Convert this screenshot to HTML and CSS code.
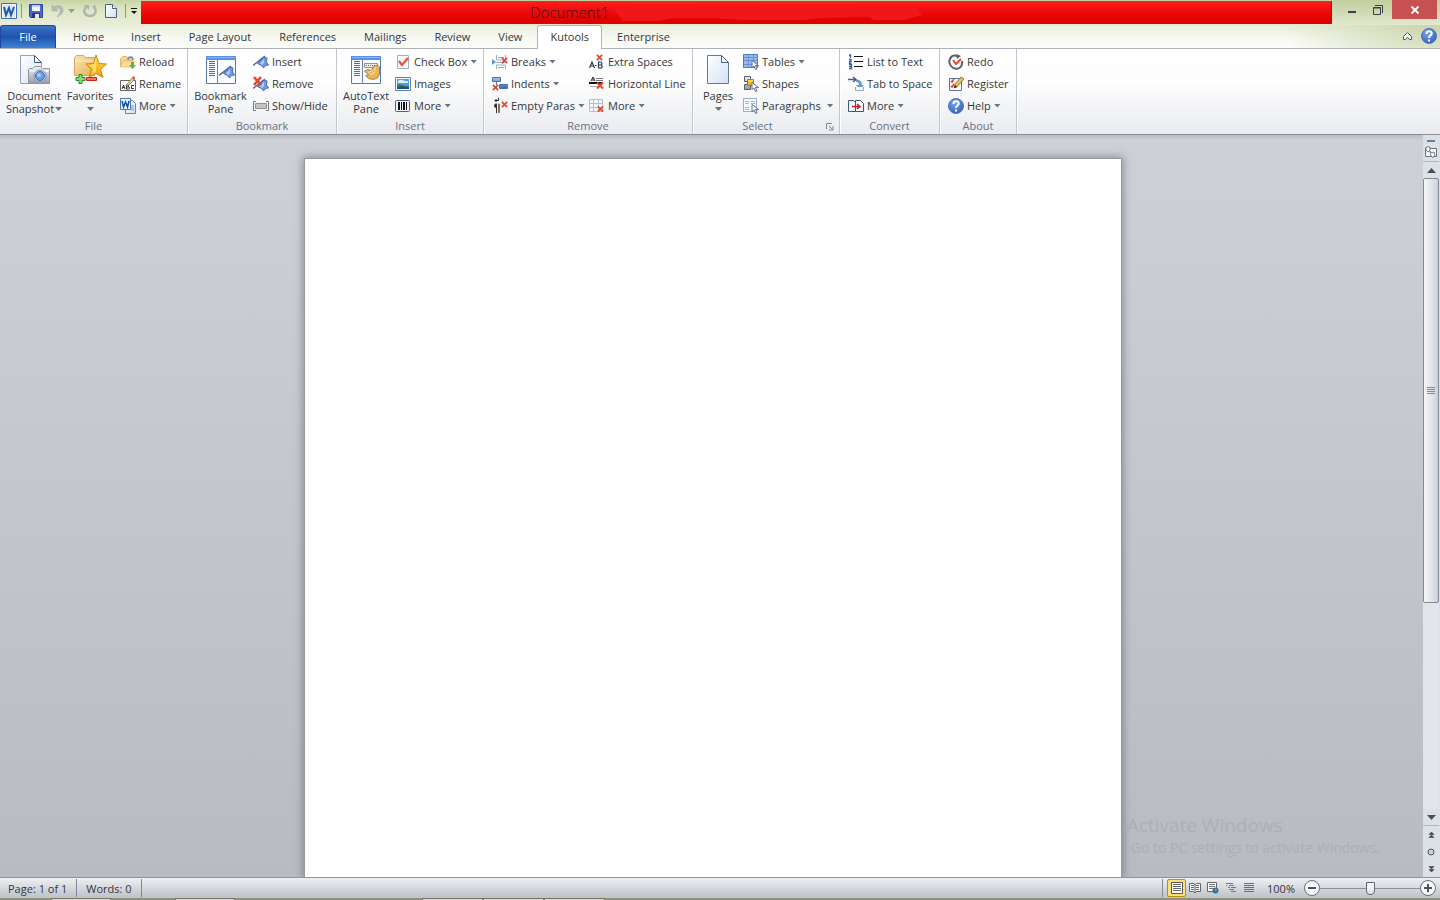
FILE: index.html
```
<!DOCTYPE html>
<html lang="en">
<head>
<meta charset="utf-8">
<title>Document1</title>
<link rel="stylesheet" href="styles.css">
</head>
<body>
<svg class="defs" aria-hidden="true">
  <defs>
    <linearGradient id="blue" x1="0" y1="0" x2="0" y2="1"><stop offset="0" stop-color="#a5c3f0"/><stop offset="1" stop-color="#3e68b4"/></linearGradient>
    <linearGradient id="paper" x1="0" y1="0" x2="1" y2="1"><stop offset="0" stop-color="#fff"/><stop offset="1" stop-color="#d3e1f4"/></linearGradient>
    <linearGradient id="gold" x1="0" y1="0" x2="0" y2="1"><stop offset="0" stop-color="#ffe25a"/><stop offset="1" stop-color="#f0a000"/></linearGradient>
    <linearGradient id="folder" x1="0" y1="0" x2="1" y2="1"><stop offset="0" stop-color="#fbe6b4"/><stop offset="1" stop-color="#e5ae55"/></linearGradient>
    <linearGradient id="grey" x1="0" y1="0" x2="0" y2="1"><stop offset="0" stop-color="#eef1f5"/><stop offset="1" stop-color="#939ca8"/></linearGradient>
    <radialGradient id="ball" cx=".4" cy=".3" r=".8"><stop offset="0" stop-color="#7ba5ee"/><stop offset="1" stop-color="#2f5cb8"/></radialGradient>
    <symbol id="x" viewBox="0 0 8 8"><path d="M1 1l6 6M7 1L1 7" stroke="#e8452c" stroke-width="2"/></symbol>
    <symbol id="flag" viewBox="0 0 16 16"><path d="M0 11.500L12 2" stroke="#55688a" stroke-width="1.400"/><path d="M4.500 9.500L11 3l3 1-.5 4 2 3-3 .5-2 2.500-2-2.500z" fill="#6f9be0" stroke="#3a66b0" stroke-width=".9"/><path d="M7 9.500l4-4.500v4l-2 2z" fill="#b4cef6"/></symbol>
    <symbol id="cursor" viewBox="0 0 8 10"><path d="M1 .5v7l2-1.500 1.500 3.500 1.500-.5-1.500-3.500h3z" fill="#fff" stroke="#52688b" stroke-width=".9"/></symbol>
    <symbol id="q" viewBox="0 0 16 16"><circle cx="8" cy="8" r="7.500" fill="url(#ball)" stroke="#4a73c0"/><path d="M5.500 6c0-4 5.500-3.500 5.200-.3C10.500 7.500 8 7.500 8 10" fill="none" stroke="#fff" stroke-width="2"/><path d="M7 11.500h2v2H7z" fill="#fff"/></symbol>
    <symbol id="pane" viewBox="0 0 32 32"><path d="M1.500 2.500h29v27h-29z" fill="#f8fbff" stroke="#5b79a8"/><path d="M1 2h30v4H1z" fill="#5b8ee6"/><path d="M2 3h28v1H2z" fill="#8eb4f8"/><path d="M12.500 6v23" stroke="#6b85ae"/><path d="M4 7.500h6M4 9.500h6M4 11.500h6M4 13.500h6M4 15.500h6M4 17.500h6M4 19.500h6M4 21.500h6" stroke="#3e70d0"/></symbol>
  </defs>
</svg>

<div class="app">
  <header class="titlebar">
    <div class="quick">
      <svg class="i16" viewBox="0 0 16 16"><path d="M.5.5h15v15H.5z" fill="#f5f9ff" stroke="#3f6db5"/><path d="M2 2h12v12H2z" fill="#dce8f9"/><path d="M3 4l2 8 3-7 2 7 3-8" fill="none" stroke="#2058b0" stroke-width="2"/></svg>
      <span class="qsep q1"></span>
      <button class="qbtn save" aria-label="Save"><svg class="i16" viewBox="0 0 16 16"><path d="M1.500 1.500h13v13h-12l-1-1z" fill="#4d68c8" stroke="#3146a0"/><path d="M4 2h8v6H4z" fill="#f3f7ff"/><path d="M4 2h8v2H4z" fill="#bcd0f4"/><path d="M4 10h8v5H4z" fill="#283875"/><path d="M7 11h4v4H7z" fill="#e6ebf5"/></svg></button>
      <button class="qbtn undo" aria-label="Undo"><svg class="i16" viewBox="0 0 16 16"><path d="M3 2v6h6L7 6c3-2 5 0 4 3-.5 2-2 4-3 5 4-2 6-4 6-7 0-5-6-5-9-3z" fill="#b7bbb8" stroke="#a3a7a4" stroke-width=".6"/></svg></button>
      <i class="caret pale"></i>
      <button class="qbtn redo" aria-label="Repeat"><svg class="i16" viewBox="0 0 16 16"><path d="M4 4c-4 5 0 9 4 9s8-4 4-9" fill="none" stroke="#b0b4b1" stroke-width="2.400"/><path d="M2 2h5v5z" fill="#aeb2af"/><path d="M10 3l3-1 1 4z" fill="#aeb2af"/></svg></button>
      <button class="qbtn new" aria-label="New"><svg class="i16" viewBox="0 0 16 16"><path d="M2.500 1.500h7l4 4v9h-11z" fill="url(#paper)" stroke="#4c6185"/><path d="M9.500 1.500v4h4" fill="#fff" stroke="#4c6185"/></svg></button>
      <span class="qsep q2"></span>
      <button class="qbtn custom" aria-label="Customize toolbar"><svg viewBox="0 0 8 8" width="8" height="8"><path d="M1 1.500h6" stroke="#111"/><path d="M1 4h6L4 7z" fill="#111"/></svg></button>
    </div>
    <div class="redbar"><span>Document1</span><svg viewBox="0 0 310 18"><path d="M0 5l25-3h53l4 2h45l30-2h80l5 1h60l7 9-18 5h-30l-5-3-50 1-15 2H130l-30-2H60l-20 4-30-1z" fill="#f1161a"/></svg></div>
    <div class="winbtns">
      <button aria-label="Minimize"><svg width="12" height="12" viewBox="0 0 12 12"><path d="M2 8h8" stroke="#3b4046" stroke-width="2"/></svg></button>
      <button aria-label="Restore"><svg width="12" height="12" viewBox="0 0 12 12"><path d="M1.500 3.500h7v7h-7zM3 1.500h7.500V9" fill="none" stroke="#3b4046"/><path d="M1 4h8" stroke="#3b4046"/></svg></button>
      <button class="close" aria-label="Close"><svg width="10" height="10" viewBox="0 0 10 10"><path d="M1.500 1.500l7 7M8.500 1.500l-7 7" stroke="#fff" stroke-width="1.800"/></svg></button>
    </div>
  </header>

  <nav class="tabs">
    <button class="filetab">File</button>
    <button class="tab">Home</button><button class="tab">Insert</button><button class="tab">Page Layout</button><button class="tab">References</button><button class="tab">Mailings</button><button class="tab">Review</button><button class="tab">View</button><button class="tab active">Kutools</button><button class="tab">Enterprise</button>
    <div class="tabend">
      <button aria-label="Minimize ribbon"><svg width="11" height="10" viewBox="0 0 11 10"><path d="M1.500 5.500l4-4 4 4v3h-2L5.500 6 3.500 8.500h-2z" fill="#fff" stroke="#4b5664"/></svg></button>
      <button aria-label="Help"><svg class="i16"><use href="#q"/></svg></button>
    </div>
  </nav>

  <main class="ribbon">
    <section class="group g-file">
      <div class="body">
        <button class="big w60"><svg class="i32" viewBox="0 0 32 32"><path d="M2.500 1.500h14l7 7v21h-21z" fill="url(#paper)" stroke="#8fa3c0"/><path d="M16.500 1.500v7h7z" fill="#f7faff" stroke="#3f597f"/><path d="M10.500 15.500l1-1h3l2-2h6l2 2h7v15h-21z" fill="url(#grey)" stroke="#8f96a0"/><path d="M11 17h20" stroke="#f5f7f9"/><circle cx="22" cy="22" r="6" fill="#d7dde6" stroke="#8a94a3"/><circle cx="22" cy="22" r="4.500" fill="#6e9de8" stroke="#3c6ab7"/><circle cx="21" cy="21" r="2" fill="#abcaf9"/><path d="M28 16h2v2h-2z" fill="#fff"/></svg><span>Document<br>Snapshot<i class="caret"></i></span></button>
        <button class="big w52"><svg class="i32" viewBox="0 0 32 32"><path d="M.5 3.500l2-2h7l2 2h9v18H.5z" fill="url(#folder)" stroke="#d9a55c"/><path d="M1 7h20" stroke="#fff1cc"/><path d="M22 1l3 8.500 7.500.5-6 5.500 2.500 8-7-4-7 4 2.500-8L12 10l7.500-.5z" fill="url(#gold)" stroke="#cf8610"/><path d="M22 4v14l-5 3 2-6-4-4 5-1z" fill="#ffe874" opacity=".7"/><path d="M5 20.500h3v3h3v3H8v3H5v-3H2v-3h3z" fill="#8ddd66" stroke="#26862a"/><path d="M12.500 23.500h10v3h-10z" fill="#f8705e" stroke="#c72219"/></svg><span>Favorites<br><i class="caret"></i></span></button>
        <div class="stack">
          <button class="small"><svg class="i16" viewBox="0 0 16 16"><path d="M.5 4.500h1l1-2h4l1 1h5v9H.500z" fill="url(#folder)" stroke="#e0b468"/><path d="M0 13l3-6h12l-3 6z" fill="#fbdc98" stroke="#dfae5e" stroke-width=".6"/><path d="M8 6c0-4 5-4 5 0" fill="none" stroke="#5d88c4" stroke-width="1.400"/><path d="M11 8h3v3h2l-3.500 4L9 11h2z" fill="#61b044"/></svg>Reload</button>
          <button class="small"><svg class="i16" viewBox="0 0 16 16"><path d="M.5 4.500h15v10H.5z" fill="#fff" stroke="#666"/><path d="M2 13l1.500-4L5 13M3 11.500h1.500M6.500 9v4h2c1.500 0 1.500-2 0-2h-2m0-2h2v2M14 9.500h-2.500v3H14" fill="none" stroke="#333"/><path d="M7 8l6-7 2 2-6 6-3 1z" fill="#d9d291" stroke="#706852" stroke-width=".7"/><path d="M12 2l1-2 2 1v2l-1 1z" fill="#cd6d50"/></svg>Rename</button>
          <button class="small"><svg class="i16" viewBox="0 0 16 16"><path d="M5.500 2.500h7l3 3v10h-10z" fill="url(#paper)" stroke="#6683ae"/><path d="M11 8h3M11 10h3M11 12h3" stroke="#779ccf"/><path d="M.5.500h10v11H.5z" fill="#eaf2ff" stroke="#497ab8"/><path d="M2 3l1.500 6L5.500 4l2 5L9 3" fill="none" stroke="#154d9f" stroke-width="1.500"/></svg>More<i class="caret"></i></button>
        </div>
      </div><h2>File</h2>
    </section>

    <section class="group g-bookmark">
      <div class="body">
        <button class="big w57"><svg class="i32" viewBox="0 0 32 32"><use href="#pane"/><use href="#flag" x="14" y="10" width="16" height="16"/></svg><span>Bookmark<br>Pane</span></button>
        <div class="stack">
          <button class="small"><svg class="i16"><use href="#flag"/></svg>Insert</button>
          <button class="small"><svg class="i16" viewBox="0 0 16 16"><use href="#flag" y="1"/><path d="M1 1l7 8M8 1L1 9" stroke="#e8452c" stroke-width="2.500"/></svg>Remove</button>
          <button class="small"><svg class="i16" viewBox="0 0 16 16"><path d="M3 3.500H.5v9H3M13 3.500h2.500v9H13" fill="none" stroke="#777"/><path d="M2.500 5.500h11v5h-11z" fill="#c3c3c3" stroke="#929292"/></svg>Show/Hide</button>
        </div>
      </div><h2>Bookmark</h2>
    </section>

    <section class="group g-insert">
      <div class="body">
        <button class="big w50"><svg class="i32" viewBox="0 0 32 32"><use href="#pane"/><path d="M14.500 9.500h13v4h-13z" fill="#eee" stroke="#92948e"/><path d="M16 11.500h10" stroke="#666" stroke-dasharray="1 1"/><path d="M14.500 17l3-1.500 4 1 2-4 4-1.500 2 2v7l-2 4-4 1.500-5-1-3-3 3-.5z" fill="#e8b554" stroke="#a57a34" stroke-width=".9"/><path d="M18 18.500l5-2M20 21l5-3M25 13v4" stroke="#ffe7ae"/></svg><span>AutoText<br>Pane</span></button>
        <div class="stack">
          <button class="small"><svg class="i16" viewBox="0 0 16 16"><path d="M2.500 1.500h11v13h-11z" fill="#f7f9fc" stroke="#a2aebe"/><path d="M4 7l3 4 6-7" fill="none" stroke="#e95036" stroke-width="2.200"/></svg>Check Box<i class="caret"></i></button>
          <button class="small"><svg class="i16" viewBox="0 0 16 16"><path d="M.5 1.500h15v13H.5z" fill="#f4f8fd" stroke="#5c82b6"/><path d="M2 3h12v10H2z" fill="#539bdc"/><path d="M3 5c3-3 6 1 10 0v2H3z" fill="#d7f0ff"/><path d="M2 9c4-2 7 2 12 1v3H2z" fill="#367342"/><path d="M2 12c4-2 8-1 12-1v2H2z" fill="#1f4e8c"/></svg>Images</button>
          <button class="small"><svg class="i16" viewBox="0 0 16 16"><rect x=".5" y="2.500" width="14" height="11" rx="1" fill="#f1f5fb" stroke="#4b6290"/><path d="M3 4h2v8H3zM6 4h1v8H6zM8 4h2v8H8zM11 4h1v8h-1z" fill="#111"/></svg>More<i class="caret"></i></button>
        </div>
      </div><h2>Insert</h2>
    </section>

    <section class="group g-remove">
      <div class="body">
        <div class="stack first">
          <button class="small"><svg class="i16" viewBox="0 0 16 16"><path d="M4.500 1v5h9V1M4.500 15v-4h9v4" fill="#f8fafd" stroke="#a4afbf"/><path d="M6 3.500h6M4 8.500h9M6 13.500h6" stroke="#9aaac1"/><path d="M0 5l4 3-4 3z" fill="#6892cc"/><use href="#x" x="9" y="3" width="7" height="7"/></svg>Breaks<i class="caret"></i></button>
          <button class="small"><svg class="i16" viewBox="0 0 16 16"><path d="M.5 1.500h8v4h-8zM7.500 8.500h8v4h-8z" fill="url(#blue)" stroke="#456fb3"/><path d="M4.500 6v3" stroke="#777"/><use href="#x" y="8" width="7" height="7"/></svg>Indents<i class="caret"></i></button>
          <button class="small"><svg class="i16" viewBox="0 0 16 16"><path d="M7 5.500H4c-2.500 0-2.500 4.500 0 4.500h1V5.500" fill="#333"/><path d="M4.500 6v9" stroke="#333"/><path d="M7 6v9" stroke="#d19b66" stroke-width="2"/><path d="M7 5.500v9" stroke="#444"/><path d="M6.500 0v2.500H3M4.500 1L3 2.500 4.500 4" fill="none" stroke="#222"/><use href="#x" x="9" y="3" width="7" height="7"/></svg>Empty Paras<i class="caret"></i></button>
        </div>
        <div class="stack">
          <button class="small"><svg class="i16" viewBox="0 0 16 16"><path d="M.5 14L3 8l2.500 6M1.500 12h3" fill="none" stroke="#203b5e" stroke-width="1.200"/><path d="M6 11.500h1.500" stroke="#333"/><path d="M9.500 8v6h2c2.500 0 2-3 0-3 2 0 1.500-3 0-3zM9.500 11h2" fill="none" stroke="#203b5e" stroke-width="1.200"/><use href="#x" x="7" y="0" width="7" height="7"/></svg>Extra Spaces</button>
          <button class="small"><svg class="i16" viewBox="0 0 16 16"><path d="M2 5l2-4 2 4M3 4h2" fill="none" stroke="#222"/><path d="M7 2.500h7M7 4.500h7" stroke="#777"/><path d="M0 7h13" stroke="#111" stroke-width="2"/><path d="M1 10.500h9" stroke="#aaa"/><use href="#x" x="7" y="5" width="8" height="9"/></svg>Horizontal Line</button>
          <button class="small"><svg class="i16" viewBox="0 0 16 16"><path d="M.5 1.500h13v12H.5zM1 5.500h12M1 9.500h12M4.500 2v11M9.500 2v11" fill="#f7f9fc" stroke="#b2bfd1"/><use href="#x" x="8" y="7" width="7" height="8"/></svg>More<i class="caret"></i></button>
        </div>
      </div><h2>Remove</h2>
    </section>

    <section class="group g-select">
      <div class="body">
        <button class="big w42"><svg class="i32" viewBox="0 0 32 32"><path d="M5.500 1.500h14l7 7v21h-21z" fill="url(#paper)" stroke="#627895"/><path d="M19.500 1.500v7h7z" fill="#fff" stroke="#4b6282"/></svg><span>Pages<br><i class="caret"></i></span></button>
        <div class="stack">
          <button class="small"><svg class="i16" viewBox="0 0 16 16"><path d="M.5.500h14v13H.5z" fill="#96b8f3" stroke="#5078c2"/><path d="M1 3.500h14M1 6.500h14M1 10.500h14M5.500 1v13M10.500 1v13" stroke="#6a90d8"/><use href="#cursor" x="8" y="6" width="8" height="10"/></svg>Tables<i class="caret"></i></button>
          <button class="small"><svg class="i16" viewBox="0 0 16 16"><path d="M1.500.500h6v5h-6zM1.500 8.500h6v5h-6z" fill="url(#grey)" stroke="#565e68"/><path d="M4.500 3.500h6v6h-6z" fill="url(#gold)" stroke="#a77925"/><use href="#cursor" x="8" y="6" width="8" height="10"/></svg>Shapes</button>
          <button class="small"><svg class="i16" viewBox="0 0 16 16"><path d="M.5.500h13v13H.5z" fill="#f7faff" stroke="#9caec7"/><path d="M2 3.500h4M8 3.500h4M2 5.500h4M8 5.500h4M2 9.500h4M2 11.500h4" stroke="#a5b3c6"/><use href="#cursor" x="8" y="6" width="8" height="10"/></svg>Paragraphs<i class="caret far"></i></button>
        </div>
      </div><h2>Select</h2>
      <button class="launcher" aria-label="Select options"><svg width="8" height="8" viewBox="0 0 8 8"><path d="M.5 6V.5H6M3 3l4 4M7 3v4H3" fill="none" stroke="#838994"/></svg></button>
    </section>

    <section class="group g-convert">
      <div class="body"><div class="stack">
        <button class="small"><svg class="i16" viewBox="0 0 16 16"><path d="M2.500 0v4M1 1.500h1.500M1 5.500h2v2H1.500v2h2M1 10.500h2.500v4H1m0-2h2" fill="none" stroke="#2f61b9" stroke-width="1.300"/><path d="M6 2.500h9M6 7.500h9M6 12.500h9" stroke="#111"/></svg>List to Text</button>
        <button class="small"><svg class="i16" viewBox="0 0 16 16"><path d="M0 3.500h7M5 1l3 2.500L5 6" fill="none" stroke="#455e80" stroke-width="1.500"/><path d="M8 4c4-1 6 2 6 5h2l-4 4-4-4h3c0-2-1-3-3-3z" fill="#6c99de"/><path d="M7.500 11v3.500h8V11" fill="#f3f7ff" stroke="#93abc8"/></svg>Tab to Space</button>
        <button class="small"><svg class="i16" viewBox="0 0 16 16"><path d="M.5 2.500h5l2 2v9h-7zM7.500 2.500h5l3 3v8h-8z" fill="#f9fbff" stroke="#3d557b"/><path d="M4 8.500h7M9 6l3 2.500L9 11" fill="none" stroke="#cf1919" stroke-width="1.500"/></svg>More<i class="caret"></i></button>
      </div></div><h2>Convert</h2>
    </section>

    <section class="group g-about">
      <div class="body"><div class="stack">
        <button class="small"><svg class="i16" viewBox="0 0 16 16"><path d="M9 2C3 0-1 7 3 12s12 3 11-5" fill="none" stroke="#59616b" stroke-width="2"/><path d="M8 0l5 2-4 3z" fill="#59616b"/><path d="M5 6l3 4 5-5" fill="none" stroke="#e8452c" stroke-width="2"/></svg>Redo</button>
        <button class="small"><svg class="i16" viewBox="0 0 16 16"><path d="M1.500 2.500h12v12h-12z" fill="#f8faff" stroke="#5e7292"/><path d="M3 5l1 1 2-3M3 10l1 1 2-3" fill="none" stroke="#e33a25" stroke-width="1.500"/><path d="M6 12l1-4 6-7 3 2-7 8z" fill="#ecba58" stroke="#8a6029" stroke-width=".8"/><path d="M6 12l1-3 2 2z" fill="#222"/></svg>Register</button>
        <button class="small"><svg class="i16"><use href="#q"/></svg>Help<i class="caret"></i></button>
      </div></div><h2>About</h2>
    </section>
  </main>

  <div class="workspace">
    <div class="canvas">
      <article class="page" contenteditable="true" aria-label="Document page"></article>
      <div class="watermark"><p class="wm1">Activate Windows</p><p class="wm2">Go to PC settings to activate Windows.</p></div>
    </div>
    <aside class="scroll">
      <span class="split"></span>
      <button class="ruler" aria-label="View ruler"><svg width="12" height="12" viewBox="0 0 12 12"><path d="M.5 2.500h11v8H.5z" fill="#f2f4f6" stroke="#69737e"/><path d="M1 1h4v3L3 6 1 4zM5 5l2 2 2-1 1 3-2 2.500L6 10z" fill="#fff" stroke="#5c6063" stroke-width=".8"/></svg></button>
      <button class="up" aria-label="Scroll up"><svg width="9" height="5" viewBox="0 0 9 5"><path d="M0 5l4.500-5L9 5z" fill="#4b4f54"/></svg></button>
      <div class="track"><div class="thumb"><svg width="8" height="8" viewBox="0 0 8 8"><path d="M0 .5h8M0 2.500h8M0 4.500h8M0 6.500h8" stroke="#858b93"/></svg></div></div>
      <button class="down" aria-label="Scroll down"><svg width="9" height="5" viewBox="0 0 9 5"><path d="M0 0h9L4.500 5z" fill="#4b4f54"/></svg></button>
      <button class="nav" aria-label="Previous page"><svg width="7" height="8" viewBox="0 0 7 8"><path d="M1 3.500L3.500 1 6 3.500zM1 6.500L3.500 4 6 6.500z" fill="#444" stroke="#444" stroke-width=".6"/></svg></button>
      <button class="nav" aria-label="Browse object"><svg width="8" height="8" viewBox="0 0 8 8"><circle cx="4" cy="4" r="3" fill="#ccd0d5" stroke="#555"/></svg></button>
      <button class="nav" aria-label="Next page"><svg width="7" height="8" viewBox="0 0 7 8"><path d="M1 1.500L3.500 4 6 1.500zM1 4.500L3.500 7 6 4.500z" fill="#444" stroke="#444" stroke-width=".6"/></svg></button>
    </aside>
  </div>

  <footer class="status">
    <button class="stat">Page: 1 of 1</button><button class="stat words">Words: 0</button>
    <div class="views">
      <button class="view on" aria-label="Print layout"><svg width="12" height="12" viewBox="0 0 12 12"><path d="M.5.500h11v11H.5z" fill="#fff" stroke="#555"/><path d="M2 2.500h8M2 4.500h8M2 6.500h8M2 8.500h8" stroke="#666"/></svg></button>
      <button class="view" aria-label="Full screen reading"><svg width="12" height="12" viewBox="0 0 12 12"><path d="M.5 1.500h4l1.500 1 1.500-1h4v8h-4L6 11 4.500 9.500h-4z" fill="#f6f6f6" stroke="#666"/><path d="M2 3.500h3M2 5.500h3M2 7.500h3M7 3.500h3M7 5.500h3M7 7.500h3M6 2v9" stroke="#666"/></svg></button>
      <button class="view" aria-label="Web layout"><svg width="12" height="12" viewBox="0 0 12 12"><path d="M.5.500h9v9h-9z" fill="#f8f8f8" stroke="#666"/><path d="M2 2.500h6M2 4.500h6M2 6.500h5" stroke="#777"/><circle cx="8.500" cy="8.500" r="3" fill="#2d6cae"/><path d="M7 8l2-2 1 2-1 2z" fill="#55a66a"/></svg></button>
      <button class="view" aria-label="Outline"><svg width="12" height="12" viewBox="0 0 12 12"><path d="M1 1.500h7M4 3.500h5M6 5.500h5M4 7.500h5M6 9.500h5M1 3.500h1M3 5.500h2" stroke="#737973"/></svg></button>
      <button class="view" aria-label="Draft"><svg width="12" height="12" viewBox="0 0 12 12"><path d="M1 1.500h10M1 3.500h10M1 5.500h10M1 7.500h10M1 9.500h10" stroke="#697169"/></svg></button>
    </div>
    <button class="percent">100%</button>
    <button class="zoom" aria-label="Zoom out"><svg width="16" height="16" viewBox="0 0 16 16"><circle cx="8" cy="8" r="7.500" fill="#f8f9fa" stroke="#666d76"/><path d="M4 8h8" stroke="#4d535b" stroke-width="2"/></svg></button>
    <input class="slider" type="range" aria-label="Zoom" min="0" max="100" value="50">
    <button class="zoom" aria-label="Zoom in"><svg width="16" height="16" viewBox="0 0 16 16"><circle cx="8" cy="8" r="7.500" fill="#f8f9fa" stroke="#666d76"/><path d="M4 8h8M8 4v8" stroke="#4d535b" stroke-width="2"/></svg></button>
  </footer>
  <div class="taskedge"><i class="e1"></i><i class="e2"></i><i class="e3"></i><i class="e4"></i><i class="e5"></i></div>
</div>
</body>
</html>
```
FILE: styles.css
```
* { box-sizing: border-box; }
body { margin: 0; font: 11px/13px "Open Sans", "Noto Sans", sans-serif; color: #33373d; overflow: hidden; }
button { margin: 0; padding: 0; border: 0; background: none; font: inherit; color: inherit; }
svg { display: block; flex: none; }
.defs { position: absolute; width: 0; height: 0; }
.i16 { width: 16px; height: 16px; }
.i32 { width: 32px; height: 32px; overflow: visible; }
.app { display: flex; flex-direction: column; height: 100vh; }

.titlebar { display: flex; height: 25px; flex: none; background: linear-gradient(#c2cf9f, #ccd7af 40%, #e2e9cf); }
.quick { display: flex; align-items: center; width: 141px; padding: 0 0 3px 1px; background: linear-gradient(#c8d4a6, #dde6c4 40%, #e9eed9); }
.qsep { width: 1px; height: 14px; background: #8f9881; }
.q1 { margin-left: 4px; }
.q2 { margin-left: 6px; }
.save { margin-left: 6px; }
.undo { margin-left: 5px; }
.redo { margin-left: 7px; }
.new { margin-left: 5px; }
.custom { margin-left: 4px; }
.redbar { flex: 1; display: flex; align-items: center; height: 23px; margin-top: 1px; padding-left: 389px; background: linear-gradient(#ff2020, #ee0b0b 45%, #da0000); border-right: 1px solid #b20c0c; border-bottom: 1px solid #a91a10; font-size: 15px; font-weight: 300; line-height: 20px; color: #3a1414; }
.redbar svg { width: 310px; height: 18px; margin-left: 4px; }
.winbtns { display: flex; align-items: flex-start; width: 108px; padding-left: 7px; }
.winbtns button { display: flex; align-items: center; justify-content: center; width: 26px; height: 19px; }
.winbtns .close { width: 45px; margin-left: 1px; background: #c75050; }

.tabs { display: flex; flex: none; height: 24px; align-items: stretch; border-bottom: 1px solid #adb1b8; background: radial-gradient(ellipse 160px 60px at 100% 0, #c9d5ac, transparent), linear-gradient(#e9edda, #f6f8f0 50%, #fcfcfa); }
.filetab { width: 56px; margin-right: 3px; padding-bottom: 1px; color: #fff; border: 1px solid #1d489c; border-bottom: 0; border-radius: 3px 3px 0 0; background: linear-gradient(#3d72c8, #1f53ad 50%, #3f83d8); }
.tab { padding: 0 14px 0 13px; white-space: nowrap; }
.tab:nth-of-type(2) { padding-left: 14px; }
.tab:nth-of-type(n+4) { padding: 0 14px; }
.tab.active:nth-of-type(n) { margin: 0 1px -1px 1px; padding: 0 12px 2px 12px; border: 1px solid #b0b5bb; border-bottom: 0; border-radius: 3px 3px 0 0; background: #fff; }
.tabend { display: flex; align-items: center; gap: 8px; margin-left: auto; padding: 0 3px 1px 0; }

.ribbon { display: flex; flex: none; height: 86px; border-bottom: 1px solid #898e96; background: linear-gradient(#fff, #fdfdfd 40%, #e9ebef); }
.group { position: relative; padding-left: 4px; border-right: 1px solid #c3c7cd; box-shadow: 1px 0 0 #fff; }
.g-file { width: 188px; }
.g-bookmark { width: 149px; }
.g-insert { width: 147px; }
.g-remove { width: 209px; }
.g-select { width: 147px; }
.g-convert { width: 100px; }
.g-about { width: 77px; }
.body { display: flex; height: 69px; padding-top: 2px; }
.group h2 { margin: 0; padding-right: 4px; font-size: 11px; font-weight: 400; line-height: 16px; text-align: center; color: #69717f; }
.g-select h2 { padding-right: 21px; }
.big { display: flex; flex-direction: column; align-items: center; padding-top: 3px; white-space: nowrap; }
.big span { display: block; margin-top: 3px; text-align: center; }
.w60 { width: 60px; }
.w57 { width: 57px; }
.w52 { width: 52px; }
.w50 { width: 50px; }
.w42 { width: 42px; }
.stack { padding-left: 4px; }
.stack.first { width: 97px; }
.small { display: flex; align-items: center; gap: 3px; height: 22px; padding-bottom: 2px; white-space: nowrap; }
.small svg { margin-top: 2px; }
.caret { display: inline-block; width: 7px; height: 4px; margin-left: 1px; vertical-align: 2px; background: #6e737a; clip-path: polygon(0 0, 100% 0, 50% 100%); }
.small .caret { margin: 1px 0 0 0; }
.small .far { margin-left: 3px; }
.pale { background: #979c91; margin-left: 3px; }
.launcher { position: absolute; right: 5px; bottom: 3px; }

.workspace { display: flex; flex: 1; min-height: 0; }
.canvas { position: relative; flex: 1; display: flex; justify-content: center; padding: 24px 0 0 3px; overflow: hidden; background: linear-gradient(#b9bcc1, #cdd0d5 5px, #cbced3 100px, #b8bbc0); }
.page { width: 816px; background: #fff; outline: 1px solid #969ba2; box-shadow: 0 0 8px 2px rgba(70, 75, 82, .5); }
.watermark { position: absolute; right: 43px; bottom: 19px; color: #adb0b3; }
.watermark p { margin: 0; }
.wm1 { font-size: 19px; line-height: 26px; }
.wm2 { font-size: 14px; line-height: 20px; }
.watermark .wm1 { margin-left: -4px; }
.scroll { display: flex; flex-direction: column; width: 17px; padding: 5px 1px 0 0; background: #dce0e7; }
.scroll button { display: flex; align-items: center; justify-content: center; flex: none; }
.split { height: 2px; flex: none; margin: 0 4px 0 4px; background: #777d84; }
.ruler { height: 20px; border-bottom: 1px solid #b3b8bf; }
.up { height: 16px; }
.track { flex: 1; background: #e2e5ea; }
.thumb { display: flex; align-items: center; justify-content: center; height: 67.4%; border: 1px solid #828a96; border-radius: 2px; background: linear-gradient(90deg, #f6f7f9, #dfe3e9 60%, #cbd0d8); }
.down { height: 17px; border-bottom: 1px solid #b3b8bf; }
.nav { height: 17px; }

.status { display: flex; flex: none; align-items: center; height: 21px; padding-right: 4px; border-top: 1px solid #8e949c; background: linear-gradient(#eef0f3, #d7dade 45%, #bec2c8); }
.stat { height: 18px; padding: 0 9px 0 8px; border-right: 1px solid #82888f; }
.stat + .stat { padding: 0 9px; }
.views { display: flex; align-items: center; height: 18px; margin-left: auto; padding-left: 4px; border-left: 1px solid #858b92; }
.view { display: flex; align-items: center; justify-content: center; width: 18px; height: 18px; }
.view.on { width: 19px; border: 1px solid #bd8b20; border-radius: 2px; background: #ffdf79; }
.percent { width: 46px; }
.zoom { width: 16px; }
.slider { appearance: none; width: 100px; height: 16px; margin: 0; background: linear-gradient(#8b9199, #8b9199) center / 100% 1px no-repeat; }
.slider::-webkit-slider-thumb { appearance: none; width: 9px; height: 13px; background: linear-gradient(#fff, #dfe2e7); border: 1px solid #616971; border-radius: 1px 1px 5px 5px; }
.taskedge { display: flex; flex: none; height: 2px; background: #8d927f; }
.taskedge i { height: 2px; border: 1px solid #727767; border-bottom: 0; background: #d9dad5; }
.e1 { width: 60px; margin-left: 51px; }
.e2 { width: 60px; margin-left: 64px; }
.e3 { width: 61px; margin-left: 187px; }
.e4 { width: 61px; }
.e5 { width: 61px; }
```
